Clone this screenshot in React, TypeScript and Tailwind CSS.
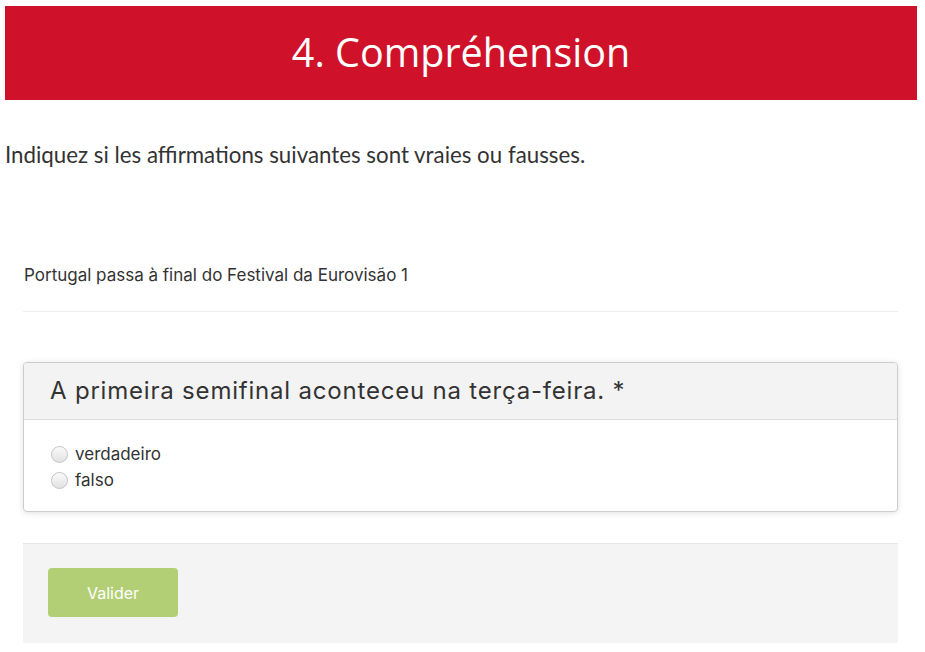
export default function App() {
  return (
    <div className="min-h-[652px] bg-white pt-[6px] text-[#333]">
      {/* header */}
      <div className="mx-[5px] w-[912px] flex h-[94px] items-center justify-center bg-[#cf1229]">
        <h1 className="text-[39.5px] font-normal text-white [font-family:'Open_Sans',sans-serif]">
          4. Compréhension
        </h1>
      </div>

      <p className="mt-[41px] ml-[5px] text-[22.3px] leading-[28px] text-[#333] [font-family:Lato,sans-serif]">
        Indiquez si les affirmations suivantes sont vraies ou fausses.
      </p>

      <div className="mx-[23px] w-[875px] [font-family:Inter,Roboto,sans-serif]">
        <div className="mt-[95px] border-b border-[#eeeeee] pb-[25px] text-[17px] leading-[22px] text-[#333]">
          <div className="pl-[1px]">Portugal passa à final do Festival da Eurovisão 1</div>
        </div>

        {/* question card */}
        <div className="mt-[50px] overflow-hidden rounded-[4px] border border-[#cccccc] bg-white shadow-[0_1px_6px_rgba(0,0,0,0.12)]">
          <div className="flex h-[57px] items-center border-b border-[#dddddd] bg-[#f3f3f3] px-[26px] text-[24px] tracking-[0.8px] text-[#333]">
            A primeira semifinal aconteceu na terça-feira. *
          </div>
          <div className="flex flex-col gap-[8px] px-[27px] pt-[25px] pb-[22px] text-[17px] leading-[18px]">
            {["verdadeiro", "falso"].map((label) => (
              <label key={label} className="flex items-center gap-[7px]">
                <span className="h-[17px] w-[17px] rounded-full border border-[#c4c4c4] bg-gradient-to-b from-[#fafafa] to-[#e2e2e2]" />
                <span>{label}</span>
              </label>
            ))}
          </div>
        </div>

        {/* footer */}
        <div className="mt-[31px] h-[100px] border-t border-[#e5e5e5] bg-[#f4f4f4] pt-[24px] pl-[25px]">
          <button className="h-[49px] w-[130px] rounded-[4px] bg-[#b3cf76] text-[16px] text-white">
            Valider
          </button>
        </div>
      </div>
    </div>
  );
}
